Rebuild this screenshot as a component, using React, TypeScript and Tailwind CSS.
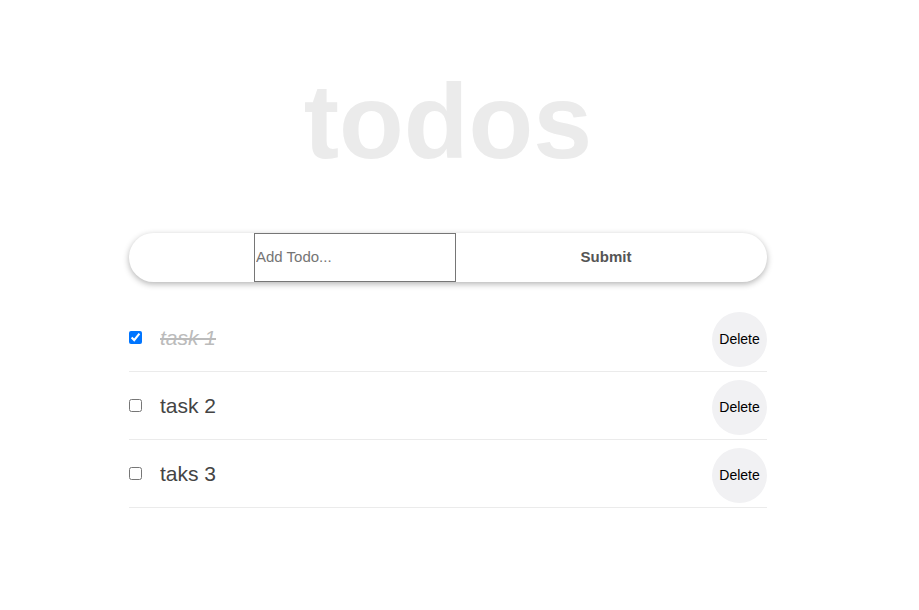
import React, { useState } from "react";

interface Todo {
  id: number;
  text: string;
  done: boolean;
}

export default function App() {
  const [todos, setTodos] = useState<Todo[]>([
    { id: 1, text: "task 1", done: true },
    { id: 2, text: "task 2", done: false },
    { id: 3, text: "taks 3", done: false },
  ]);
  const [value, setValue] = useState("");

  const toggle = (id: number) =>
    setTodos((t) => t.map((x) => (x.id === id ? { ...x, done: !x.done } : x)));
  const remove = (id: number) => setTodos((t) => t.filter((x) => x.id !== id));

  return (
    <div className="min-h-screen bg-white pr-[23px] font-['Liberation_Sans',Arial,sans-serif]">
      <div className="w-[638px] mx-auto flex flex-col">
        {/* Title */}
        <h1 className="text-center text-[106px] font-bold text-[#ebebeb] leading-none pt-[68px] pb-[59px]">
          todos
        </h1>

        {/* Form */}
        <form
          onSubmit={(e) => {
            e.preventDefault();
            if (!value.trim()) return;
            setTodos((t) => [...t, { id: Date.now(), text: value, done: false }]);
            setValue("");
          }}
          className="flex h-[49px] rounded-full bg-white shadow-[0_2px_6px_rgba(0,0,0,0.3)] pl-[125px] pr-[11px]"
        >
          <input
            value={value}
            onChange={(e) => setValue(e.target.value)}
            placeholder="Add Todo..."
            className="w-[202px] h-full border border-[#767676] px-[1px] pb-[2px] text-[15px] text-[#333] placeholder:text-[#757575] outline-none"
          />
          <button type="submit" className="flex-1 text-[15px] font-bold text-[#555] pb-[1px]">
            Submit
          </button>
        </form>

        {/* List */}
        <ul className="mt-[22px] flex flex-col">
          {todos.map((todo) => (
            <li key={todo.id} className="flex items-center pt-[8px] pb-[4px] border-b border-[#ebebeb]">
              <input
                type="checkbox"
                checked={todo.done}
                onChange={() => toggle(todo.id)}
                className="w-[13px] h-[13px] m-0 mb-[4px] accent-[#0075ff]"
              />
              <span
                className={
                  "ml-[18px] mb-[4px] flex-1 text-[21px] " +
                  (todo.done ? "italic line-through text-[#bbbbbb]" : "text-[#444]")
                }
              >
                {todo.text}
              </span>
              <button
                onClick={() => remove(todo.id)}
                className="w-[55px] h-[55px] rounded-full bg-[#f1f1f3] text-[14px] text-black"
              >
                Delete
              </button>
            </li>
          ))}
        </ul>
      </div>
    </div>
  );
}
